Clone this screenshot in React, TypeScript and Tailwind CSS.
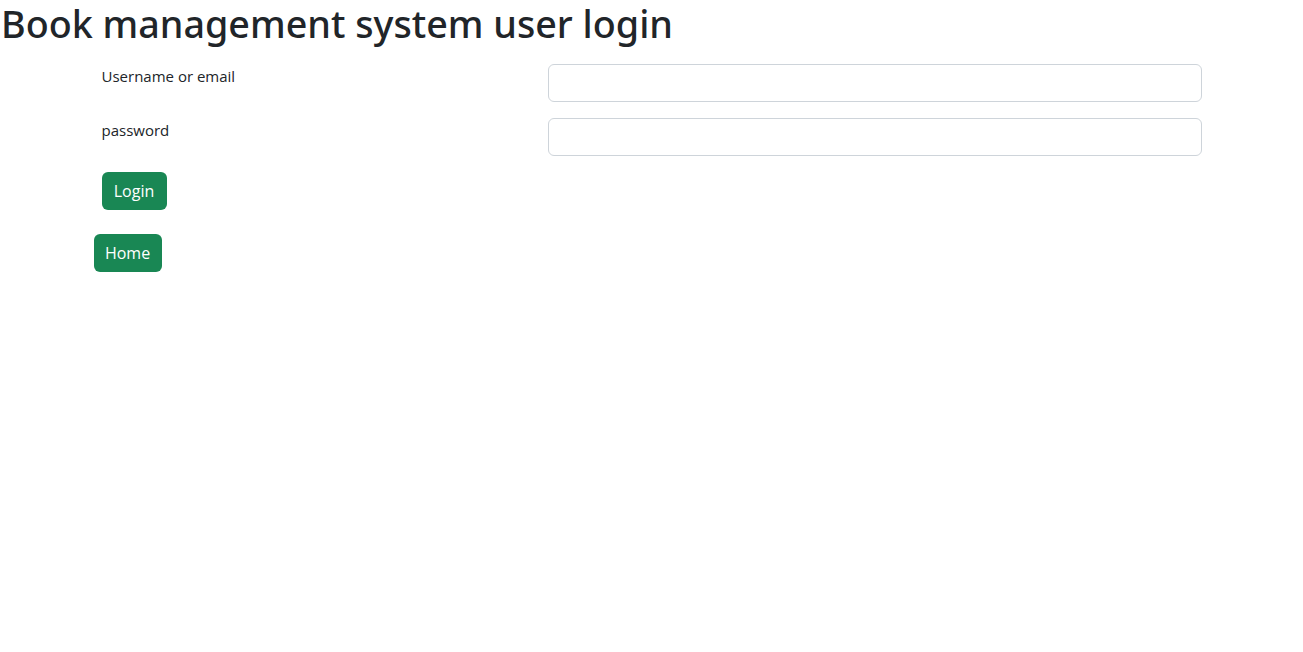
export default function App() {
  return (
    <div className="min-h-screen bg-white text-[#212529]" style={{ fontFamily: '"Open Sans", sans-serif' }}>
      <h1 className="text-[37.7px] leading-[48px] font-medium mb-2 pl-[1px]" style={{ fontFamily: '"Noto Sans", sans-serif' }}>
        Book management system user login
      </h1>
      <div className="w-[1140px] mx-auto px-3">
        <form className="px-2 pt-2" onSubmit={(e) => e.preventDefault()}>
          <div className="flex mb-4">
            <label className="w-[446px] text-[15px] leading-[24px]">Username or email</label>
            <input type="text" className="w-[654px] h-[38px] border border-[#ced4da] rounded-[6px] px-3 outline-none" />
          </div>
          <div className="flex mb-4">
            <label className="w-[446px] text-[15px] leading-[24px]">password</label>
            <input type="password" className="w-[654px] h-[38px] border border-[#ced4da] rounded-[6px] px-3 outline-none" />
          </div>
          <button type="submit" className="w-[65px] h-[38px] bg-[#198754] text-white text-[16px] rounded-[6px] flex items-center justify-center">
            Login
          </button>
        </form>
        <button type="button" className="mt-6 w-[68px] h-[38px] bg-[#198754] text-white text-[16px] rounded-[6px] flex items-center justify-center">
          Home
        </button>
      </div>
    </div>
  );
}
